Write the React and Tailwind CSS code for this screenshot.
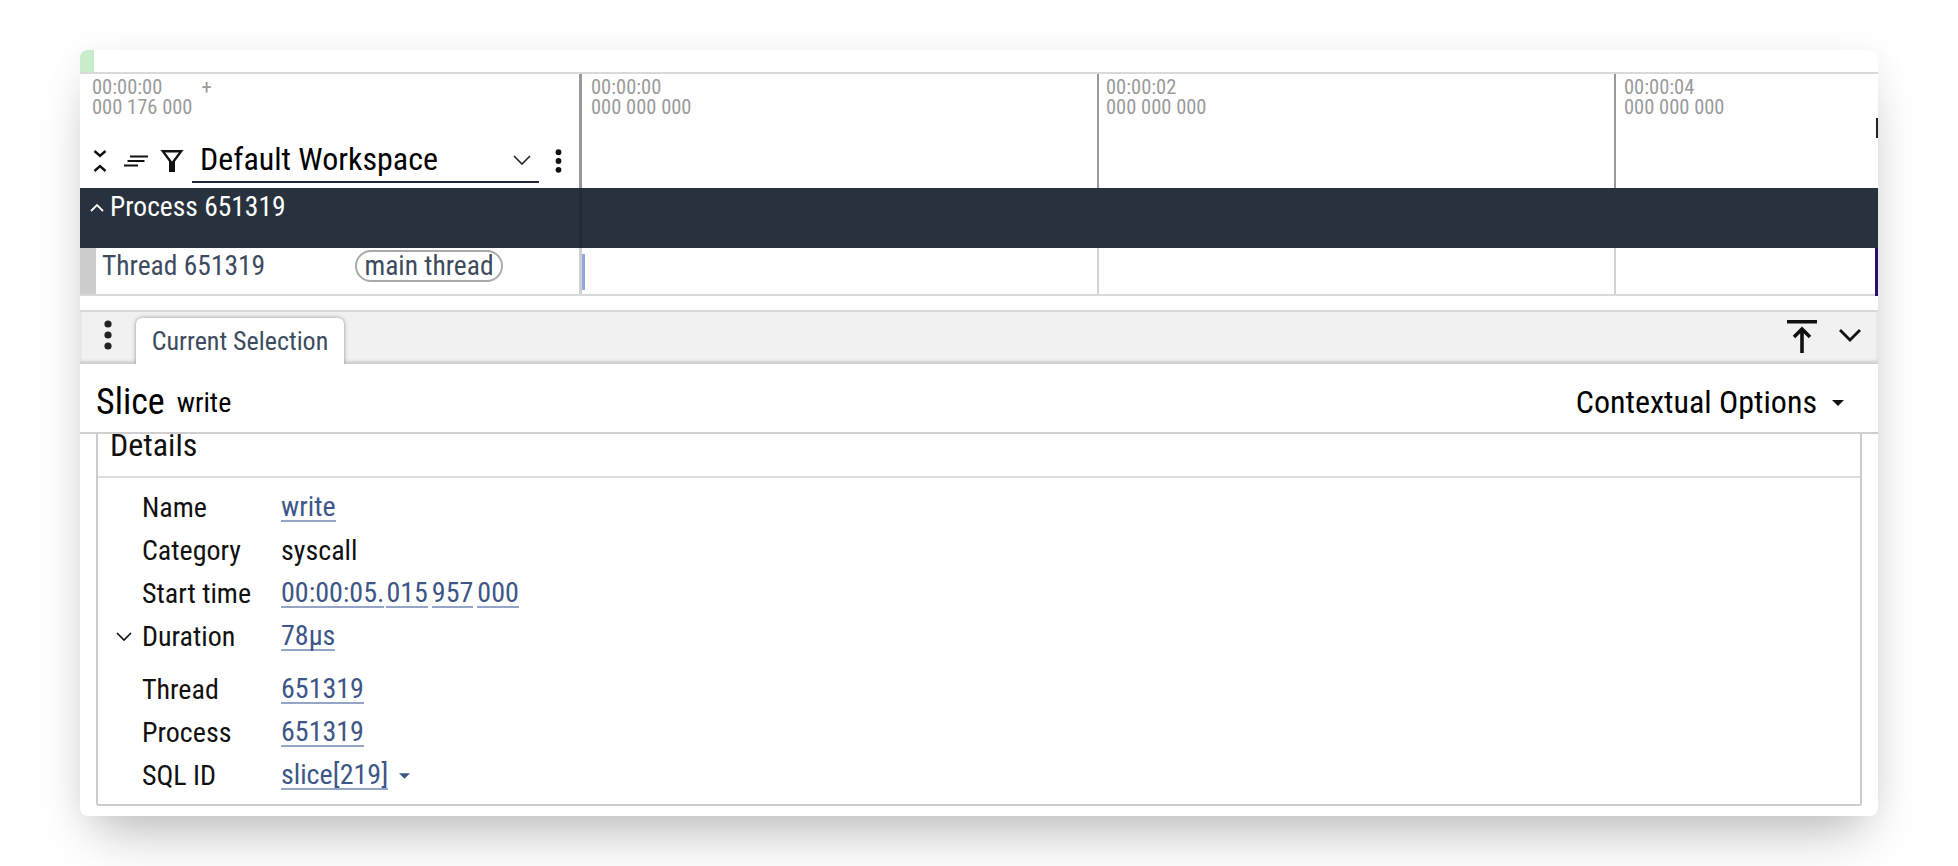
import React from 'react';

const font = { fontFamily: 'Roboto, sans-serif' };

const Dots = ({ className }) => (
  <svg viewBox="0 0 10 30" className={className} fill="currentColor">
    <circle cx="5" cy="4" r="3.6" />
    <circle cx="5" cy="15" r="3.6" />
    <circle cx="5" cy="26" r="3.6" />
  </svg>
);

const TimeLabel = ({ top, bottom }) => (
  <div className="text-[20.5px] leading-[20px] text-[#9b9b9b]">
    <div>{top}</div>
    <div>{bottom}</div>
  </div>
);

const Link = ({ children, className }) => (
  <span className={`text-[#3d5688] border-b-2 border-[#94a5c6] leading-[27px] inline-block ${className || ''}`}>{children}</span>
);

const Row = ({ label, chevron, className, children }) => (
  <div className={`flex items-center h-[43px] ${className || ''}`}>
    <div className="w-[44px] flex justify-end pr-[10px]">
      {chevron && (
        <svg viewBox="0 0 16 10" className="w-[16px] h-[10px]" fill="none" stroke="#111" strokeWidth="1.6">
          <path d="M1 1l7 7 7-7" />
        </svg>
      )}
    </div>
    <div className="w-[139px] text-[#111]">{label}</div>
    <div className="flex items-center gap-[4px] text-[#111]">{children}</div>
  </div>
);

export default function App() {
  return (
    <div className="min-h-screen bg-white pt-[50px] px-[80px] overflow-hidden [font-stretch:85%]" style={font}>
      <div className="h-[766px] w-[1798px] bg-white rounded-lg overflow-hidden shadow-[0_30px_50px_-15px_rgba(0,0,0,0.26),0_0_36px_rgba(0,0,0,0.05)] flex flex-col">
        {/* top overview strip */}
        <div className="h-[22px] border-b-2 border-[#d9d9d9] box-content shrink-0">
          <div className="w-[14px] h-[22px] bg-[#c9eccb]" />
        </div>

        {/* time header */}
        <div className="flex h-[114px] shrink-0">
          <div className="w-[499px] shrink-0 flex flex-col">
            <div className="flex pl-[12px] pt-[3px] h-[65px]">
              <TimeLabel top="00:00:00" bottom="000 176 000" />
              <div className="ml-[9px] text-[20.5px] leading-[20px] text-[#9b9b9b]">+</div>
            </div>
            <div className="flex items-center h-[44px] relative">
              <svg viewBox="0 0 14 24" className="ml-[13px] w-[14px] h-[24px]" fill="none" stroke="#111" strokeWidth="2.4">
                <path d="M1.5 2l5.5 5 5.5-5M1.5 22l5.5-5 5.5 5" />
              </svg>
              <svg viewBox="0 0 24 12" className="ml-[17px] w-[24px] h-[12px]" fill="none" stroke="#111" strokeWidth="1.8">
                <path d="M6 1.5h18M3.5 6h17M0 10.5h14" />
              </svg>
              <svg viewBox="0 0 24 24" className="ml-[12px] w-[24px] h-[24px]" fill="#111" fillRule="evenodd">
                <path d="M0.5 1h23L15 12.5V23H9V12.5zM5.2 3.6L12 12.4l6.8-8.8z" />
              </svg>
              <div className="ml-[8px] w-[347px] h-[44px] border-b-2 border-[#1f2b3a] flex items-center pl-[8px] pr-[8px] justify-between">
                <span className="text-[32px] text-black -mt-[2px]">Default Workspace</span>
                <svg viewBox="0 0 18 10" className="w-[18px] h-[10px]" fill="none" stroke="#222" strokeWidth="1.6">
                  <path d="M1 1l8 8 8-8" />
                </svg>
              </div>
              <Dots className="ml-[15px] w-[9px] h-[24px] text-[#111]" />
            </div>
          </div>
          <div className="flex-1 flex relative">
            <div className="w-[518px] border-l-[3px] border-[#999] pl-[9px] pt-[3px]">
              <TimeLabel top="00:00:00" bottom="000 000 000" />
            </div>
            <div className="w-[517px] border-l-2 border-[#999] pl-[7px] pt-[3px]">
              <TimeLabel top="00:00:02" bottom="000 000 000" />
            </div>
            <div className="flex-1 border-l-2 border-[#999] pl-[8px] pt-[3px]">
              <TimeLabel top="00:00:04" bottom="000 000 000" />
            </div>
            <div className="absolute right-0 top-[44px] w-[2px] h-[20px] bg-[#222]" />
          </div>
        </div>

        {/* process band */}
        <div className="flex h-[60px] shrink-0 bg-[#28323e]">
          <div className="w-[499px] shrink-0 flex items-start pl-[10px] pt-[1px] text-white text-[27.5px] leading-[36px]">
            <svg viewBox="0 0 14 8" className="mt-[15px] w-[14px] h-[8px]" fill="none" stroke="#fff" strokeWidth="1.8">
              <path d="M1 7l6-6 6 6" />
            </svg>
            <span className="ml-[6px]">Process 651319</span>
          </div>
          <div className="w-[3px] bg-[#232b36]" />
        </div>

        {/* thread row */}
        <div className="flex h-[48px] shrink-0 border-b-2 border-[#d9d9d9]">
          <div className="w-[16px] bg-[#cccccc]" />
          <div className="w-[483px] flex items-start pt-[2px] text-[#3d4b5e] text-[27.5px] leading-[32px]">
            <span className="ml-[6px] w-[253px]">Thread 651319</span>
            <span className="border-2 border-[#aaaaaa] rounded-full h-[32px] w-[148px] flex items-center justify-center">main thread</span>
          </div>
          <div className="flex-1 flex relative">
            <div className="w-[518px] border-l-[3px] border-[#cfcfcf]" />
            <div className="w-[517px] border-l-2 border-[#d4d4d4]" />
            <div className="flex-1 border-l-2 border-[#d4d4d4]" />
            <div className="absolute left-[3px] top-[6px] w-[3px] h-[36px] bg-[#8fa5ea]" />
            <div className="absolute right-0 top-0 w-[3px] h-[48px] bg-[#2a0d6e]" />
          </div>
        </div>

        <div className="h-[14px] shrink-0" />

        {/* tab bar */}
        <div className="h-[54px] shrink-0 bg-[#f1f1f1] border-t-2 border-[#d9d9d9] flex items-end shadow-[inset_0_-3px_3px_rgba(0,0,0,0.14)] relative">
          <Dots className="absolute left-[23px] top-[8px] w-[10px] h-[30px] text-[#222]" />
          <div className="ml-[56px] w-[208px] h-[46px] bg-white rounded-t-md shadow-[0_0_4px_rgba(0,0,0,0.4)] text-[#3d4b5e] text-[26px] flex items-center justify-center">
            Current Selection
          </div>
          <div className="absolute right-[17px] top-[8px] flex items-start gap-[22px]">
            <svg viewBox="0 0 30 34" className="w-[30px] h-[34px]" fill="none" stroke="#111" strokeWidth="3.6">
              <path d="M0 1.8h30M15 33V10M7 17l8-8 8 8" />
            </svg>
            <svg viewBox="0 0 22 14" className="mt-[8px] w-[22px] h-[14px]" fill="none" stroke="#111" strokeWidth="2.8">
              <path d="M1 2l10 10 10-10" />
            </svg>
          </div>
        </div>

        {/* selection header */}
        <div className="relative bg-white h-[70px] shrink-0 flex items-center border-b-2 border-[#cfcfcf] pl-[16px] pr-[34px] pt-[7px] text-black">
          <span className="text-[36px]">Slice</span>
          <span className="ml-[12px] text-[28px] mt-[2px]">write</span>
          <span className="ml-auto text-[32px]">Contextual Options</span>
          <svg viewBox="0 0 12 6" className="ml-[15px] mt-[2px] w-[12px] h-[6px]" fill="#111">
            <path d="M0 0h12L6 6z" />
          </svg>
        </div>

        {/* details */}
        <div className="flex-1 px-[16px] pb-[10px] min-h-0">
          <div className="h-full border-x-2 border-b-2 border-[#cccccc] rounded-b-[3px] text-[28px]">
            <div className="h-[42px] border-b-2 border-[#dddddd] box-content pl-[12px] leading-[22px] text-[#111] text-[32px]">Details</div>
            <div className="pt-[8px]">
              <Row label="Name"><Link>write</Link></Row>
              <Row label="Category">syscall</Row>
              <Row label="Start time">
                <Link>00:00:05.</Link><Link className="-ml-[2px]">015</Link><Link>957</Link><Link>000</Link>
              </Row>
              <Row label="Duration" chevron className="mb-[10px]"><Link>78µs</Link></Row>
              <Row label="Thread"><Link>651319</Link></Row>
              <Row label="Process"><Link>651319</Link></Row>
              <Row label="SQL ID">
                <Link>slice[219]</Link>
                <svg viewBox="0 0 12 6" className="ml-[7px] w-[11px] h-[6px]" fill="#3d5688">
                  <path d="M0 0h12L6 6z" />
                </svg>
              </Row>
            </div>
          </div>
        </div>
      </div>
    </div>
  );
}
